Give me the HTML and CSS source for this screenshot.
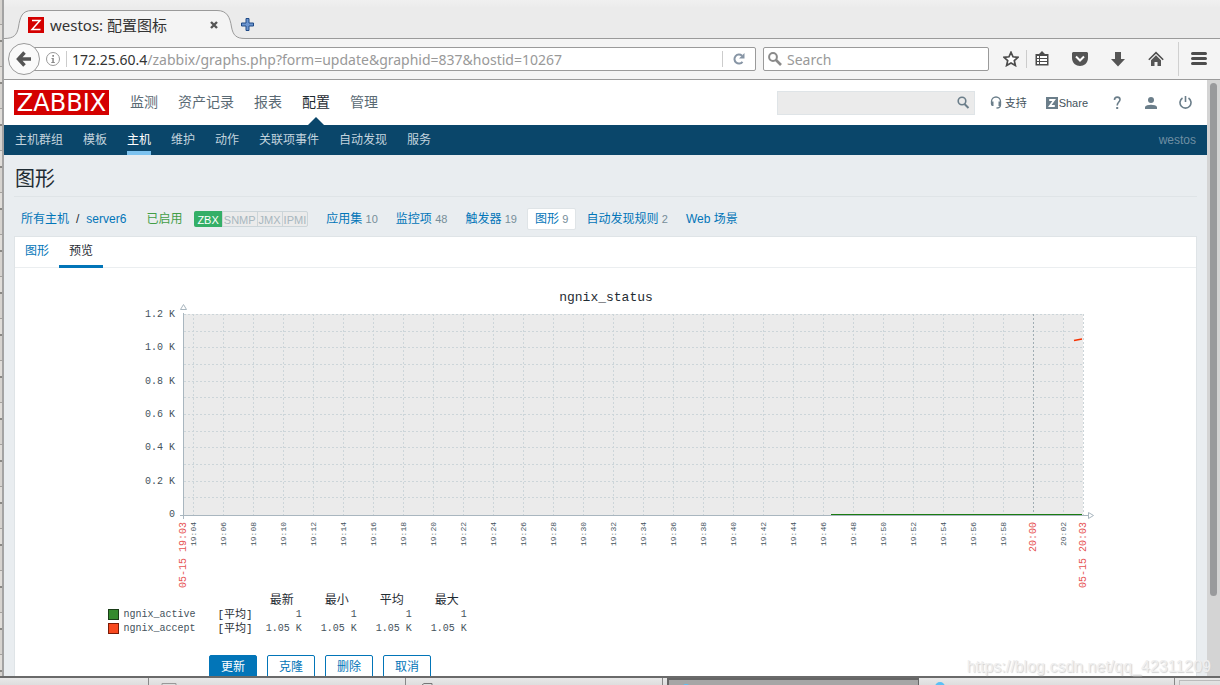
FILE: index.html
```html
<!DOCTYPE html>
<html lang="zh-CN">
<head>
<meta charset="utf-8">
<title>westos: 配置图标</title>
<link rel="stylesheet" href="styles.css">
</head>
<body>
<div class="desktop">
  <div class="edge"></div>
  <div class="window">
    <div class="tabstrip">
      <div class="tab">
        <svg class="tab-shape" width="241" height="39" viewBox="0 0 241 39"><path d="M0 38.500C10 38.500 13 35 14.500 27C16 17 18 10.500 28 10.500H213C223 10.500 226 17 227.500 27C229 35 232 38.500 241 38.500V39H0Z" fill="#f4f4f4"/><path d="M0 38.500C10 38.500 13 35 14.500 27C16 17 18 10.500 28 10.500H213C223 10.500 226 17 227.500 27C229 35 232 38.500 241 38.500" fill="none" stroke="#9a9a9a"/></svg>
        <svg class="favicon" width="16" height="16" viewBox="0 0 16 16"><path fill="#d40000" d="M0 0h16v16H0z"/><path d="M4 3.500h8L4 12.500h8.500" fill="none" stroke="#fff" stroke-width="1.500"/></svg>
        <span class="tab-title">westos: 配置图标</span>
        <button class="tab-close" aria-label="关闭标签页"><svg width="8" height="8" viewBox="0 0 8 8"><path d="M1 1l6 6M7 1L1 7" stroke="#555" stroke-width="2.400"/></svg></button>
      </div>
      <button class="new-tab" aria-label="新建标签页"><svg width="13" height="13" viewBox="0 0 13 13"><path d="M5 .5h3V5h4.500v3H8v4.500H5V8H.5V5H5z" fill="#6c95cf" stroke="#1f4a87"/></svg></button>
    </div>
    <div class="toolbar">
      <button class="back" aria-label="后退"><svg width="16" height="16" viewBox="0 0 16 16"><path d="M8.500 1.500L2.500 8l6 6.500M3 8h12" fill="none" stroke="#555" stroke-width="3.500"/></svg></button>
      <div class="urlbar">
        <svg width="14" height="14" viewBox="0 0 14 14"><circle cx="7" cy="7" r="6.500" fill="none" stroke="#999"/><path d="M6.300 3h1.700v1.700H6.300zM5.500 6h2.300v4h1v1H5.300v-1h1V7h-.8z" fill="#888"/></svg>
        <span class="vline"></span>
        <div class="url"><b>172.25.60.4</b>/zabbix/graphs.php?form=update&amp;graphid=837&amp;hostid=10267</div>
        <button class="reload" aria-label="重新载入"><svg width="12" height="12" viewBox="0 0 12 12"><path d="M9.500 8.800A4.500 4.500 0 1 1 9 2.700" fill="none" stroke="#8795a5" stroke-width="2"/><path d="M11.500 0v5.500H6z" fill="#8795a5"/></svg></button>
      </div>
      <label class="searchbar"><svg width="14" height="14" viewBox="0 0 14 14"><circle cx="5" cy="5" r="3.900" fill="none" stroke="#8a8a8a" stroke-width="2"/><path d="M8 8l5 5" stroke="#8a8a8a" stroke-width="2.600"/></svg><input type="text" placeholder="Search" aria-label="Search"></label>
      <div class="tools">
        <button aria-label="收藏"><svg width="16" height="16" viewBox="0 0 16 16"><path d="M8 1.300l2 4.500 5 .5-3.700 3.300 1.100 4.900L8 12l-4.400 2.500 1.100-4.900L1 6.300l5-.5z" fill="#fff" stroke="#4c4c4c" stroke-width="1.700"/></svg></button>
        <button class="divided" aria-label="书签"><svg width="16" height="16" viewBox="0 0 16 16"><path d="M1.500 3H5l3-3 3 3h3.500v11.500h-13z" fill="#4c4c4c"/><path d="M3 5h2v2H3zm3 0h7v2H6zM3 8h2v2H3zm3 0h7v2H6zm-3 3h2v2H3zm3 0h7v2H6z" fill="#fff"/></svg></button>
        <button aria-label="Pocket"><svg width="16" height="16" viewBox="0 0 16 16"><path d="M1 1h14l1 1v5c0 5-4 8-8 8S0 12 0 7V2z" fill="#555"/><path d="M4 5.500l4 4 4-4" fill="none" stroke="#fff" stroke-width="2"/></svg></button>
        <button aria-label="下载"><svg width="16" height="16" viewBox="0 0 16 16"><path d="M5 1h6v7h4l-7 7.500L1 8h4z" fill="#555"/></svg></button>
        <button aria-label="主页"><svg width="16" height="16" viewBox="0 0 16 16"><path d="M.8 8.800L8 1.600l7.200 7.200" fill="none" stroke="#4c4c4c" stroke-width="1.500"/><path d="M8 4.200l5 5V15H9.500v-4h-3v4H3V9.200z" fill="#555"/></svg></button>
        <button class="menu" aria-label="菜单"><svg width="16" height="16" viewBox="0 0 16 16"><path d="M1.500 2.500h13M1.500 7.500h13M1.500 12.500h13" stroke="#4c4c4c" stroke-width="3" stroke-linecap="round"/></svg></button>
      </div>
    </div>
    <div class="viewport">
      <div class="page">
        <header class="header">
          <a class="logo" href="#">ZABBIX</a>
          <nav class="nav"><a href="#">监测</a><a href="#">资产记录</a><a href="#">报表</a><a href="#" class="current">配置</a><a href="#">管理</a></nav>
          <div class="find"><input type="text" aria-label="搜索"><button aria-label="搜索"><svg width="14" height="14" viewBox="0 0 14 14"><circle cx="6" cy="5" r="3.800" fill="none" stroke="#6b7e8a" stroke-width="1.600"/><path d="M8.500 8l4 4" stroke="#6b7e8a" stroke-width="2"/></svg></button></div>
          <a class="support" href="#"><svg width="12" height="13" viewBox="0 0 12 13"><path d="M1.500 8V5.500a4.500 4.500 0 0 1 9 0V9c0 2-1 3-4 3" fill="none" stroke="#6b7e8a" stroke-width="1.300"/><path d="M1 5.500h2.500V10H2L1 9zM8.500 5.500H11V9l-1 1H8.500z" fill="#6b7e8a"/></svg>支持</a>
          <a class="share" href="#"><svg width="12" height="12" viewBox="0 0 12 12"><path fill="#6b7e8a" d="M0 0h12v12H0z"/><path d="M3.200 3h5L3.800 9h5" fill="none" stroke="#fff" stroke-width="1.800"/></svg>Share</a>
          <a class="icon" href="#" aria-label="帮助"><svg width="12" height="14" viewBox="0 0 12 14"><path d="M3.500 4c0-4 5.500-3.500 5.500-.5C9 6 6.200 6 6.200 9.500" fill="none" stroke="#6b7e8a" stroke-width="1.600"/><path d="M5.200 11h2v2h-2z" fill="#6b7e8a"/></svg></a>
          <a class="icon" href="#" aria-label="用户"><svg width="12" height="12" viewBox="0 0 12 12"><circle cx="6" cy="3" r="3" fill="#6b7e8a"/><path d="M0 12v-2c1-3 11-3 12 0v2z" fill="#6b7e8a"/></svg></a>
          <a class="icon" href="#" aria-label="退出"><svg width="13" height="13" viewBox="0 0 13 13"><path d="M3.500 2a5.500 5.500 0 1 0 6 0M6.500 0v6" fill="none" stroke="#6b7e8a" stroke-width="1.600"/></svg></a>
        </header>
        <nav class="subnav"><a href="#">主机群组</a><a href="#">模板</a><a href="#" class="current">主机</a><a href="#">维护</a><a href="#">动作</a><a href="#">关联项事件</a><a href="#">自动发现</a><a href="#">服务</a><span class="server">westos</span></nav>
        <main class="content">
          <h1>图形</h1>
          <div class="crumbs">
            <span class="path"><a href="#">所有主机</a><i>/</i><a href="#">server6</a></span>
            <span class="enabled">已启用</span>
            <span class="status"><span class="on">ZBX</span><span>SNMP</span><span>JMX</span><span>IPMI</span></span>
            <a href="#">应用集 <sub>10</sub></a>
            <a href="#">监控项 <sub>48</sub></a>
            <a href="#">触发器 <sub>19</sub></a>
            <a href="#" class="selected">图形 <sub>9</sub></a>
            <a href="#">自动发现规则 <sub>2</sub></a>
            <a href="#">Web 场景</a>
          </div>
          <section class="panel">
            <div class="tabs"><a href="#">图形</a><a href="#" class="current">预览</a></div>
            <figure class="graph">
              <svg class="chart" viewBox="0 0 1000 307" width="1000" height="307">
                <text class="chart-title" x="500" y="14">ngnix_status</text>
                <rect x="78" y="27" width="899" height="201" fill="#ebebeb"/>
                <g id="grid"></g>
                <path d="M77.500 26v206M74 228.500h911" stroke="#a9b6bf" fill="none"/>
                <path d="M74.500 22.500h6l-3-5zM982.500 225.500v6l5-3z" stroke="#a9b6bf" fill="#fff"/>
                <path d="M725 227.500h251" stroke="#1a7c11"/>
                <path d="M968 53.500l8-1.500" stroke="#f63100" stroke-width="1.500"/>
                <g id="labels"></g>
              </svg>
              <table class="legend">
                <thead><tr><td></td><td></td><th>最新</th><th>最小</th><th>平均</th><th>最大</th></tr></thead>
                <tbody>
                  <tr><td class="name"><span class="swatch green"></span>ngnix_active</td><td class="fn">[平均]</td><td>1</td><td>1</td><td>1</td><td>1</td></tr>
                  <tr><td class="name"><span class="swatch red"></span>ngnix_accept</td><td class="fn">[平均]</td><td>1.05 K</td><td>1.05 K</td><td>1.05 K</td><td>1.05 K</td></tr>
                </tbody>
              </table>
            </figure>
            <div class="actions"><button class="primary">更新</button><button>克隆</button><button>删除</button><button>取消</button></div>
          </section>
        </main>
      </div>
      <div class="scrollbar"><div class="thumb"></div></div>
    </div>
  </div>
</div>
<div class="taskbar">
  <div class="task"></div><div class="task"><svg width="16" height="7" viewBox="0 0 16 7"><path d="M1 7V5.500h14V7" fill="#ddd" stroke="#999"/></svg></div><div class="task"><svg width="16" height="7" viewBox="0 0 16 7"><path d="M4 7l2-1.500h8V7" fill="#ddd" stroke="#777"/></svg></div><div class="task active"><span class="dot"></span></div><div class="task"><span class="dot"></span></div><div class="task tray"></div>
</div>
<div class="watermark">https://blog.csdn.net/qq_42311209</div>
<script src="chart.js"></script>
</body>
</html>
```
FILE: styles.css
```css
* { box-sizing: border-box; }
body { margin: 0; height: 100vh; display: flex; flex-direction: column; overflow: hidden; background: #fff; font: 12px/16px "Liberation Sans", "Noto Sans CJK SC", sans-serif; color: #1f2c33; }
a { color: #0275b8; text-decoration: none; }
button { border: 0; padding: 0; background: none; font: inherit; }
svg { display: block; flex: none; }
input { font: inherit; border: 0; background: none; padding: 0; min-width: 0; outline: 0; }

.desktop { flex: 1; min-height: 0; display: flex; }
.edge { width: 4px; flex: none; border-right: 2px solid #a3a3a3; background: repeating-linear-gradient(#d6d3cf 0 24px, #a5a29e 24px 25px, #e0ddd9 25px 40px, #8b8985 40px 42px); }
.window { flex: 1; min-width: 0; display: flex; flex-direction: column; }

.tabstrip { height: 39px; flex: none; display: flex; align-items: flex-end; background: linear-gradient(#f0f0f0, #ebebeb 8px); border-bottom: 1px solid #9a9a9a; }
.tab { position: relative; width: 237px; height: 26px; display: flex; align-items: center; gap: 6px; padding: 0 23px 0 24px; }
.tab-shape { position: absolute; left: 0; bottom: -1px; }
.favicon, .tab-title, .tab-close { position: relative; }
.tab-title { flex: 1; white-space: nowrap; font: 15px/20px "Noto Sans", "Noto Sans CJK SC", sans-serif; color: #333; }
.new-tab { height: 27px; }

.toolbar { height: 41px; flex: none; display: flex; align-items: center; padding-left: 4px; background: #f4f4f4; border-bottom: 1px solid #9a9a9a; font: 14px/20px "Noto Sans", sans-serif; }
.back { position: relative; z-index: 1; width: 32px; height: 32px; flex: none; display: flex; align-items: center; justify-content: center; border: 1px solid #9a9a9a; border-radius: 50%; background: #fafafa; }
.urlbar { flex: 1; min-width: 0; height: 24px; display: flex; align-items: center; margin-left: -8px; padding-left: 13px; background: #fff; border: 1px solid #9a9a9a; border-radius: 2px; }
.vline { width: 1px; height: 16px; margin: 0 5px 0 6px; background: #ccc; }
.url { flex: 1; min-width: 0; padding-top: 2px; overflow: hidden; white-space: nowrap; color: #999; }
.url b { font-weight: 400; color: #333; }
.reload { width: 33px; height: 16px; border-left: 1px solid #ccc; display: flex; align-items: center; justify-content: center; }
.searchbar { width: 226px; height: 24px; flex: none; display: flex; align-items: center; gap: 5px; margin-left: 7px; padding-left: 4px; background: #fff; border: 1px solid #9a9a9a; border-radius: 2px; }
.searchbar input { flex: 1; padding-top: 2px; }
.searchbar input::placeholder { color: #999; opacity: 1; }
.tools { display: flex; align-items: center; align-self: stretch; padding-left: 14px; }
.tools button { width: 38px; display: flex; align-items: center; }
.tools button:first-child { width: 23px; }
.tools .divided { width: 46px; height: 18px; border-left: 1px solid #ccc; padding-left: 7px; }
.tools .menu { width: 42px; height: 34px; margin-left: -8px; border-left: 1px solid #d0d0d0; padding-left: 12px; }

.viewport { flex: 1; min-height: 0; display: flex; }
.page { flex: 1; min-width: 0; overflow: hidden; background: #e9edf0; }
.scrollbar { width: 13px; flex: none; padding: 3px; background: #d4d4d4; }
.thumb { width: 7px; height: 87%; border-radius: 4px; background: #999a9c; }

.header { height: 45px; display: flex; align-items: center; padding: 0 16px 0 10px; background: #fff; }
.logo { width: 95px; height: 25px; background: #d40000; color: #fff; text-align: center; font: 24px/26px "DejaVu Sans", sans-serif; }
.nav { flex: 1; align-self: stretch; display: flex; gap: 20px; padding-left: 21px; font-size: 14px; }
.nav a { position: relative; line-height: 45px; color: #5a6a74; white-space: nowrap; }
.nav a.current { color: #1f2c33; }
.nav a.current::after { content: ""; position: absolute; left: 50%; bottom: 0; margin-left: -8px; border: 8px solid transparent; border-top: 0; border-bottom-color: #0a466a; }
.find { width: 198px; height: 24px; display: flex; align-items: center; padding-right: 4px; background: #ebebeb; border: 1px solid #dfe4e7; }
.find input { flex: 1; }
.support, .share { display: flex; align-items: center; color: #44525c; font-size: 11px; }
.support { gap: 3px; margin-left: 15px; }
.share { gap: 1px; margin: 0 12px 0 19px; }
.icon { width: 34px; display: flex; justify-content: center; }
.icon:last-child { margin-right: -11px; }

.subnav { height: 30px; display: flex; gap: 20px; padding: 0 11px; background: #0a466a; line-height: 30px; white-space: nowrap; }
.subnav a { color: #c3d4de; }
.subnav a.current { color: #fff; border-bottom: 4px solid #7dc3f0; }
.server { margin-left: auto; color: #6f8fa3; }

.content { padding: 0 10px; }
h1 { margin: 0; height: 42px; padding-left: 1px; font-size: 20px; line-height: 48px; font-weight: 400; border-bottom: 1px solid #dfe4e7; }
.crumbs { height: 39px; display: flex; align-items: center; gap: 18px; padding: 4px 0 0 7px; white-space: nowrap; }
.crumbs i { margin: 0 7px; font-style: normal; }
.crumbs sub { font-size: 11px; line-height: 11px; vertical-align: baseline; color: #768d99; }
.enabled { margin-left: 2px; color: #429e47; }
.status { display: flex; height: 16px; margin-left: -6px; border: 1px solid #ccd5d9; border-radius: 2px; background: #ebebeb; font-size: 11px; line-height: 17px; color: #a8b7bf; }
.status span { padding: 0 1px; border-left: 1px solid #ccd5d9; }
.status .on { margin: -1px 0 -1px -1px; padding: 1px 3px 0; border: 0; border-radius: 2px 0 0 2px; background: #34af67; color: #fff; }
.selected { margin: 0 -8px; padding: 2px 7px; background: #fff; border: 1px solid #dfe4e7; border-radius: 2px; }

.panel { background: #fff; border: 1px solid #dfe4e7; }
.tabs { display: flex; border-bottom: 1px solid #ebeef0; }
.tabs a { height: 30px; padding: 0 10px; line-height: 29px; }
.tabs .current { height: 31px; margin-bottom: -1px; border-bottom: 3px solid #0275b8; color: #1f2c33; }
.graph { width: 1000px; max-width: 100%; margin: 19px auto 0; font-family: "Liberation Mono", "Noto Sans CJK SC", monospace; }
.chart { max-width: 100%; height: auto; }
.chart text { fill: #44525c; font-size: 10px; }
.chart .chart-title { font-size: 13px; text-anchor: middle; fill: #1f2c33; }
.chart .value { text-anchor: end; }
.chart .time { text-anchor: end; font-size: 8px; }
.chart .date { text-anchor: end; fill: #e65353; }
.legend { margin-left: 2px; border-collapse: collapse; font-size: 10px; line-height: 14px; color: #44525c; text-align: right; white-space: nowrap; }
.legend td, .legend th { width: 55px; height: 14px; padding: 0; }
.legend th { padding-right: 8px; font-size: 12px; font-weight: 400; color: #1f2c33; }
.legend td:first-child { width: 110px; }
.legend td:nth-child(2) { width: 34px; text-align: left; }
.legend td:nth-child(3), .legend th:nth-child(3) { width: 49px; }
.legend .name { text-align: left; }
.legend .fn { color: #1f2c33; font-size: 11px; }
.swatch { display: inline-block; width: 11px; height: 11px; margin-right: 5px; border: 1px solid #1a3c17; vertical-align: middle; }
.green { background: #348a2d; }
.red { background: #f8491f; border-color: #7a1c08; }
.actions { display: flex; gap: 10px; padding: 19px 0 40px 194px; }
.actions button { width: 48px; height: 24px; border: 1px solid #0275b8; border-radius: 2px; color: #0275b8; background: #fff; }
.actions .primary { background: #0275b8; color: #fff; }

.taskbar { height: 9px; flex: none; display: grid; grid-template-columns: 149fr 257fr 257fr 256fr 256fr 45fr; background: linear-gradient(#e8e8e8, #dedede); border-top: 2px solid #6a6a6a; }
.task { border-right: 1px solid #888; padding-left: 12px; overflow: hidden; }
.active { margin-left: 4px; background: #a6a6a6; border: 2px solid #666; border-width: 2px 1px 0 2px; }
.active + .task { padding-left: 16px; }
.tray { margin: 2px 0 0 4px; border: 1px solid #bbb; border-width: 1px 0 0 1px; }
.dot { display: block; width: 10px; height: 10px; margin-top: 4px; border-radius: 50%; background: #5bc0f5; }
.watermark { position: absolute; right: 9px; bottom: 9px; font-size: 16px; line-height: 18px; color: #efefef; text-shadow: 1px 1px 1px #d2d2d2; }
```
FILE: chart.js
```js
const NS = "http://www.w3.org/2000/svg";
const grid = document.getElementById("grid");
const labels = document.getElementById("labels");

function line(d, color) {
  const p = document.createElementNS(NS, "path");
  p.setAttribute("d", d);
  p.setAttribute("stroke", color);
  p.setAttribute("stroke-dasharray", "2 2");
  grid.appendChild(p);
}

function text(x, y, content, cls, vertical) {
  const t = document.createElementNS(NS, "text");
  t.setAttribute("class", cls);
  t.setAttribute("x", x);
  t.setAttribute("y", y);
  if (vertical) t.setAttribute("transform", `rotate(-90 ${x} ${y})`);
  t.textContent = content;
  labels.appendChild(t);
}

for (let i = 0; i < 12; i++) {
  line(`M78 ${27 + Math.round(i * 50 / 3) + 0.5}H977`, "#ccd5d9");
}
["1.2 K", "1.0 K", "0.8 K", "0.6 K", "0.4 K", "0.2 K", "0"].forEach((v, i) => {
  text(69, 30 + Math.round(i * 100 / 3), v, "value");
});
for (let i = 0; i < 30; i++) {
  const minute = 4 + i * 2;
  const x = 87 + i * 30;
  const full = minute === 60;
  const hour = minute < 60 ? 19 : 20;
  line(`M${x + 0.5} 27V228`, full ? "#a0adb3" : "#ccd5d9");
  text(x + 3, 235, `${hour}:${String(minute % 60).padStart(2, "0")}`, full ? "date" : "time", true);
}
line("M977.5 27V228", "#ccd5d9");
text(80, 235, "05-15 19:03", "date", true);
text(980, 235, "05-15 20:03", "date", true);
```
